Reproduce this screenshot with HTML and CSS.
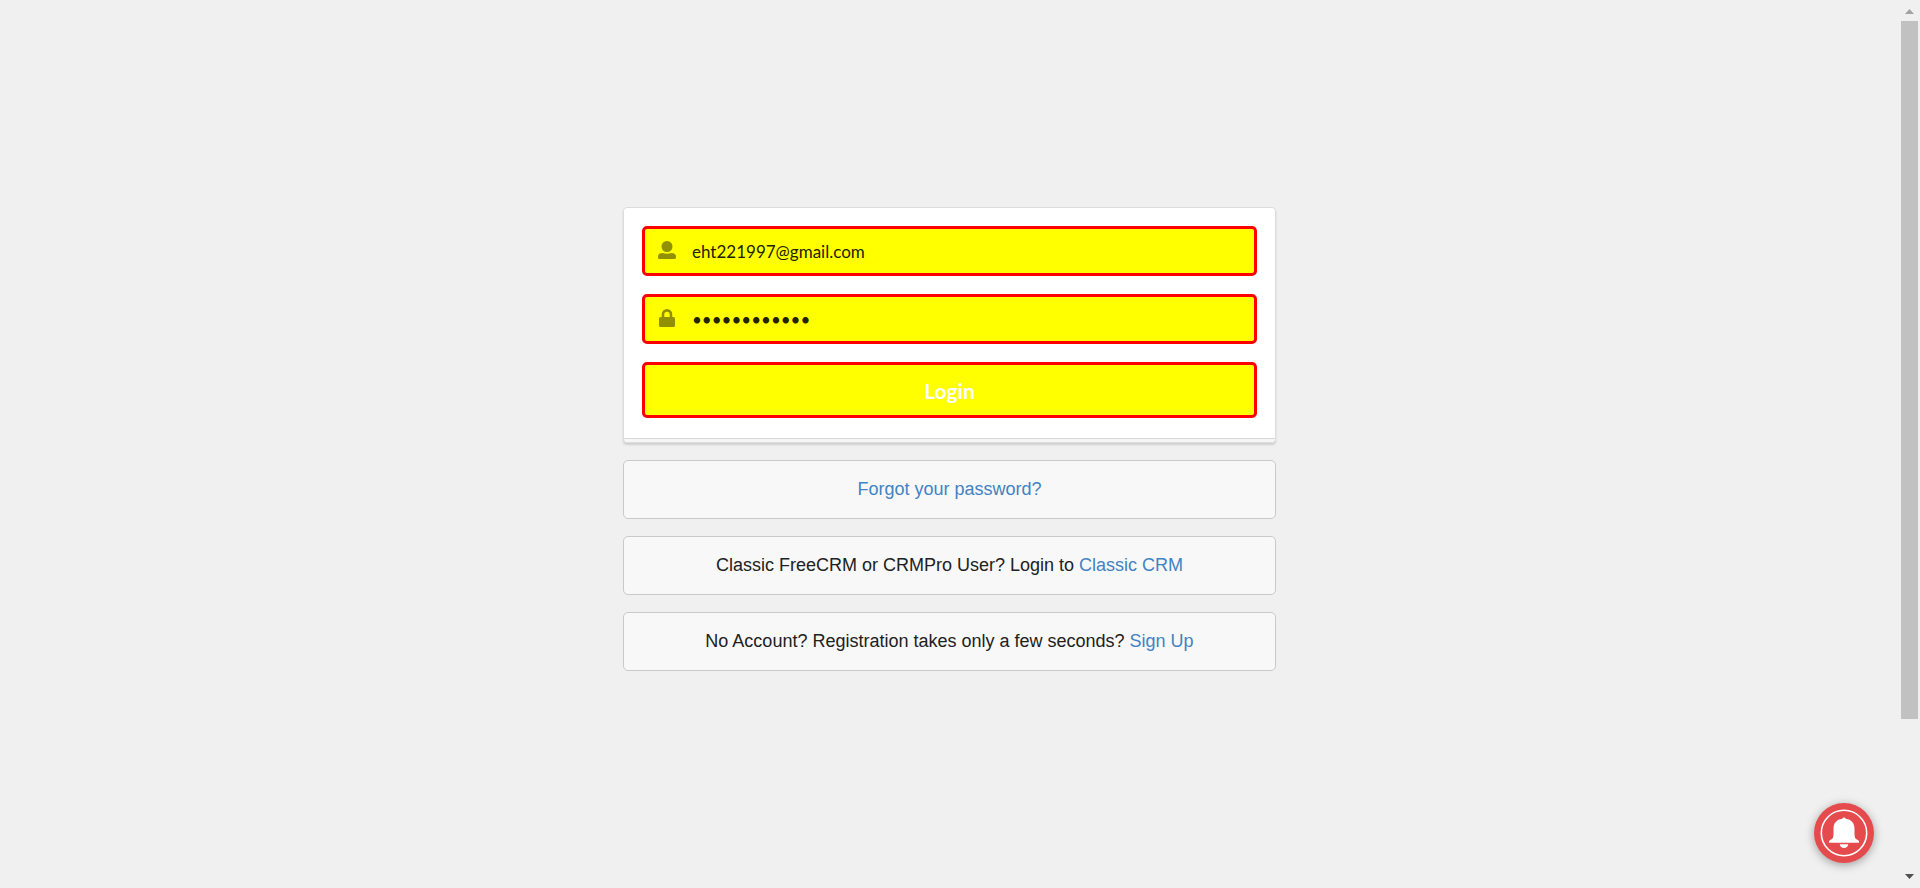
FILE: index.html
```html
<!DOCTYPE html>
<html lang="en">
<head>
<meta charset="utf-8">
<title>Login</title>
<link rel="stylesheet" href="styles.css">
</head>
<body>
<main class="page">
  <div class="column">
    <form class="card">
      <div class="card-body">
        <div class="field">
          <svg class="field-icon" viewBox="0 0 18 18" aria-hidden="true"><circle cx="9" cy="5.5" r="5.5"/><path d="M0 16.500V15.500C0 13 2 12 4.500 12C7.500 13 10.500 13 13.500 12C16 12 18 13 18 15.500V16.500Q18 18 16.500 18H1.500Q0 18 0 16.500Z"/></svg>
          <input class="field-input" type="text" name="email" aria-label="Email" value="eht221997@gmail.com">
        </div>
        <div class="field">
          <svg class="field-icon" viewBox="0 0 18 18" aria-hidden="true"><path fill-rule="evenodd" d="M3.700 8V5.500a5.300 5.500 0 0 1 10.600 0V8H15.400Q17 8 17 9.600V16.400Q17 18 15.400 18H2.600Q1 18 1 16.400V9.600Q1 8 2.600 8ZM6.300 8H11.700V5.500a2.700 2.700 0 0 0-5.400 0Z"/></svg>
          <input class="field-input" type="password" name="password" aria-label="Password" value="abcdefghijkl">
        </div>
        <button class="submit" type="button">Login</button>
      </div>
      <div class="card-foot"></div>
    </form>
    <div class="message"><a href="#">Forgot your password?</a></div>
    <div class="message">Classic FreeCRM or CRMPro User? Login to <a href="#">Classic CRM</a></div>
    <div class="message">No Account? Registration takes only a few seconds? <a href="#">Sign Up</a></div>
  </div>
</main>
<div class="scrollbar" aria-hidden="true">
  <svg class="arrow arrow-up" viewBox="0 0 9 5"><path d="M0 5L4.500 0L9 5Z"/></svg>
  <div class="track"><div class="thumb"></div></div>
  <svg class="arrow arrow-down" viewBox="0 0 9 5"><path d="M0 0L4.500 5L9 0Z"/></svg>
</div>
<button class="bell" type="button" aria-label="Notifications">
  <svg class="bell-icon" viewBox="0 0 60 60" aria-hidden="true">
    <circle class="ring" cx="30" cy="30" r="22.700"/>
    <path d="M28.300 15.800a1.800 1.800 0 0 1 3.400 0C37.500 16.500 40.500 20.500 40.500 25.500V32Q40.500 35 42.500 36.200L44.500 37.500Q45.500 38.500 45 39.700H15Q14.500 38.500 15.500 37.500L17.500 36.200Q19.500 35 19.500 32V25.500C19.500 20.500 22.500 16.500 28.300 15.800ZM25.700 41.200H34.300Q33.500 45 30 45Q26.500 45 25.700 41.200Z"/>
  </svg>
</button>
</body>
</html>
```
FILE: styles.css
```css
* {
  box-sizing: border-box;
}

body {
  margin: 0;
  display: flex;
  min-height: 100vh;
  background: #f0f0f0;
  color: #212121;
  font: 18px/25px "Liberation Sans", Arial, sans-serif;
}

.page {
  flex: 1;
  display: flex;
  justify-content: center;
  align-items: center;
  padding-bottom: 10px;
}

.column {
  display: flex;
  flex-direction: column;
  gap: 17px;
  width: 100%;
  max-width: 653px;
}

.card {
  margin: 0;
  border: 1px solid #dcdcdc;
  border-radius: 4px;
  background: #fff;
  box-shadow: 0 2px 2px #d0d0d0;
}

.card-body {
  display: flex;
  flex-direction: column;
  gap: 18px;
  padding: 18px 18px 20px;
}

.card-foot {
  height: 4px;
  border-top: 1px solid #d8d8d8;
  border-radius: 0 0 4px 4px;
  background: #f6f6f6;
}

.field {
  display: flex;
  align-items: center;
  gap: 16px;
  height: 50px;
  padding-left: 13px;
  border: 3px solid #f00;
  border-radius: 5px;
  background: #ff0;
}

.field-icon {
  width: 18px;
  height: 18px;
  flex: none;
  margin-bottom: 2px;
  fill: #909000;
}

.field-input {
  flex: 1;
  min-width: 0;
  height: 100%;
  padding: 0;
  border: 0;
  outline: 0;
  background: transparent;
  color: #222200;
  font: 17px Lato, sans-serif;
}

.submit {
  height: 56px;
  padding: 0;
  border: 3px solid #f00;
  border-radius: 5px;
  background: #ff0;
  color: #fff;
  font: bold 21px Lato, sans-serif;
}

.message {
  padding: 16px;
  border: 1px solid #c9c9c9;
  border-radius: 5px;
  background: #f8f8f8;
  text-align: center;
}

.message a {
  color: #4183c4;
  text-decoration: none;
}

.scrollbar {
  display: flex;
  flex-direction: column;
  align-items: center;
  width: 21px;
  padding: 9px 2px 9px 2px;
}

.arrow {
  width: 9px;
  height: 5px;
  flex: none;
}

.arrow-up {
  fill: #a3a3a3;
}

.arrow-down {
  fill: #505050;
}

.track {
  flex: 1;
  width: 100%;
  padding: 7px 0;
  display: flex;
  flex-direction: column;
}

.thumb {
  height: 82.5%;
  background: #c1c1c1;
}

.bell {
  position: fixed;
  right: 46px;
  bottom: 25px;
  width: 60px;
  height: 60px;
  padding: 0;
  border: 0;
  border-radius: 50%;
  background: #e54b4d;
  box-shadow: 0 2px 10px rgba(0, 0, 0, 0.35);
}

.bell-icon {
  display: block;
  fill: #fff;
}

.ring {
  fill: none;
  stroke: #fff;
  stroke-width: 1.6;
}
```
